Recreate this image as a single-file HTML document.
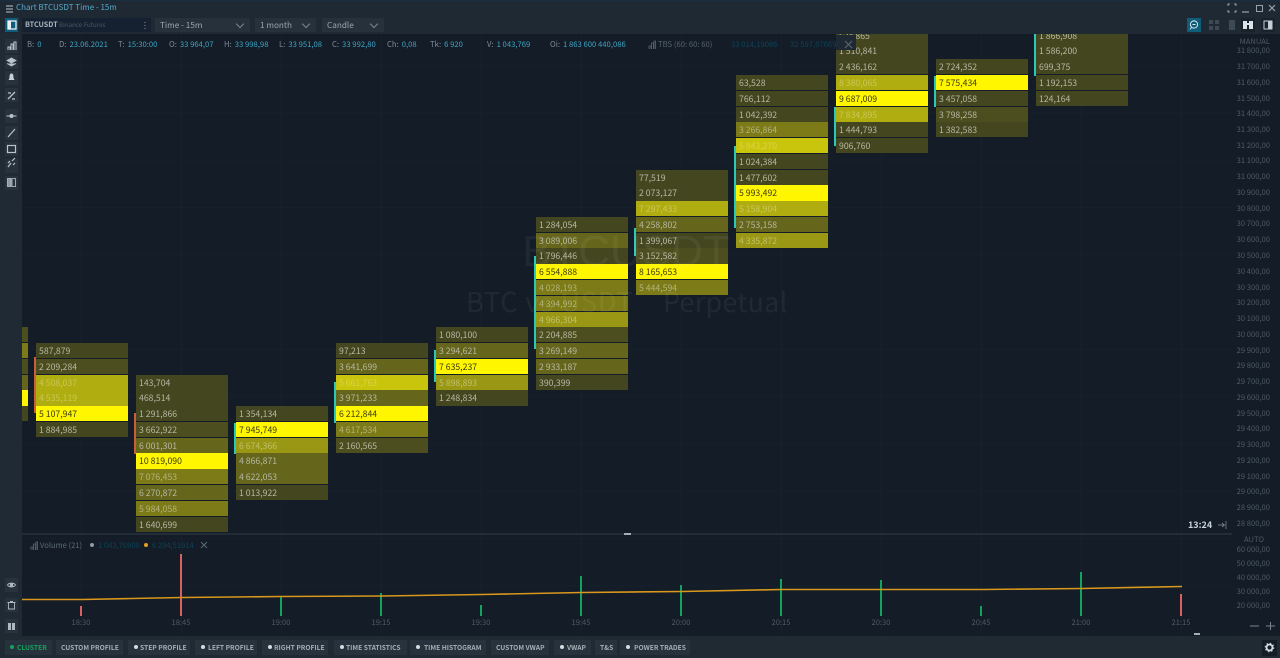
<!DOCTYPE html>
<html><head><meta charset="utf-8"><style>
html,body{margin:0;padding:0;width:1280px;height:658px;overflow:hidden;background:#131c27}
*{box-sizing:border-box}
body{position:relative;font-family:"Noto Sans CJK JP","Liberation Sans",sans-serif;color:#aab;filter:blur(.35px)}
.a{position:absolute;white-space:nowrap}
#top{left:0;top:0;width:1280px;height:34px;background:#1f2933;border-top:1px solid #16303f}
#left{left:0;top:34px;width:22px;height:602px;background:#1f2a34}
#bot{left:0;top:636px;width:1280px;height:22px;background:#1f2a33}
#chart{left:22px;top:34px;width:1210px;height:499px;overflow:hidden}
#grid{left:22px;top:34px;width:1210px;height:602px;background:linear-gradient(90deg,#16212c 1px,transparent 1px) 59px 0/100px 100%,linear-gradient(#16202b 1px,transparent 1px) 0 31px/100% 47.3px}
.col{position:absolute;top:-34px;width:92px;height:600px}
.col i{position:absolute;left:0;width:92px;height:15.2px;top:calc(43.45px + var(--k)*15.77px);font:normal 8.7px/15px "Noto Sans CJK JP","Liberation Sans",sans-serif;padding-left:3px;color:#b6b8a4}
i.A{background:#44461f}i.B{background:#4c4e1f}i.C{background:#65651b}i.D{background:#7c7b17;color:#b3b37c}
i.E{background:#999714;color:#c0c06c}i.F{background:#b0ad11;color:#c9c758}i.G{background:#c9c50c;color:#d8d548}i.Y{background:#fff600;color:#3c3c10}
.w{position:absolute;width:2px}
.t{background:#2fc7b8}.r{background:#c8603a}
.i{position:absolute;top:39px;font-size:7.7px;line-height:11px;color:#7f8d98;white-space:nowrap}
.i b{font-weight:400;color:#3fa4c4;margin-left:3px}
.p{position:absolute;right:10px;font-size:7.6px;line-height:10px;color:#4e5b66;white-space:nowrap;transform:translateY(-5px)}
.tm{position:absolute;top:618px;font-size:7.6px;line-height:10px;color:#4e5b66;transform:translateX(-50%)}
.sel{position:absolute;top:18px;height:14px;background:#26313b;font-size:8.2px;line-height:14px;color:#9ba8b0;padding-left:5px}
.sel:after{content:"";position:absolute;right:7px;top:3px;width:5px;height:5px;border-right:1px solid #7b8791;border-bottom:1px solid #7b8791;transform:rotate(45deg)}
.tab{position:absolute;top:640px;height:15px;background:#27323c;font-size:6.7px;font-weight:700;line-height:14px;color:#a4afb6;white-space:nowrap}
.tab s{position:absolute;left:6px;top:5px;width:4px;height:4px;border-radius:50%;background:#d5dbdf}
.tab span{position:absolute;top:0}
.btn{position:absolute;left:5px;width:13px;height:14px;background:#27323c}
.bar{position:absolute;width:1.6px}
.g{background:#12a35c}.d{background:#d85f62}
</style></head><body>
<div class="a" id="top"></div><div class="a" id="left"></div><div class="a" id="bot"></div>
<div class="a" id="grid"></div>

<!-- title -->
<svg class="a" style="left:6px;top:5px" width="7" height="8"><path d="M0 1H7M0 4H7M0 7H7" stroke="#b7c6d0" stroke-width="1"/></svg>
<div class="a" style="left:16px;top:2px;font-size:8px;line-height:12px;color:#56a9c9">Chart BTCUSDT Time - 15m</div>
<svg class="a" style="left:1227px;top:3px" width="50" height="11" fill="none" stroke="#94a3ad"><path d="M1 3V1H3M7 1H9V3M9 7V9H7M3 9H1V7"/><path d="M15 9H22" stroke-width="1.2"/><rect x="29.5" y="2.5" width="6" height="6"/><path d="M42 2L48 8M48 2L42 8" stroke-width="1.2"/></svg>

<!-- toolbar -->
<div class="a" style="left:5px;top:18px;width:13px;height:14px;background:#0f5d78"></div>
<svg class="a" style="left:7px;top:20px" width="10" height="10"><rect x="1" y="1" width="8" height="8" fill="none" stroke="#e8f2f6" stroke-width="1.3"/><rect x="1" y="1" width="3" height="8" fill="#e8f2f6"/></svg>
<div class="a" style="left:22px;top:18px;width:129px;height:14px;background:#152130"></div>
<div class="a" style="left:25px;top:18px;font-size:7.2px;font-weight:700;line-height:14px;color:#aab6be">BTCUSDT</div>
<div class="a" style="left:59px;top:18px;font-size:6.2px;line-height:14px;color:#4a5761">Binance Futures</div>
<svg class="a" style="left:143px;top:21px" width="4" height="9"><path d="M2 1v1M2 4v1M2 7v1" stroke="#8a97a1"/></svg>
<div class="sel" style="left:155px;width:95px">Time - 15m</div>
<div class="sel" style="left:255px;width:61px">1 month</div>
<div class="sel" style="left:322px;width:62px">Candle</div>

<div class="a" style="left:1187px;top:18px;width:14px;height:14px;background:#0f5d78"></div>
<svg class="a" style="left:1188px;top:19px" width="12" height="12" fill="none" stroke="#dbe9ee"><circle cx="6" cy="5.5" r="3.6"/><path d="M3.5 8.5L2 10.5M4.5 5.5H7.5"/></svg>
<svg class="a" style="left:1208px;top:19px" width="30" height="12"><path d="M1 1h4v4H1zM7 1h4v4H7zM1 7h4v4H1zM7 7h4v4H7z" fill="#3d4a54"/><rect x="21" y="1" width="6" height="10" fill="#3d4a54"/></svg>
<div class="a" style="left:1241px;top:18px;width:14px;height:14px;background:#18222d"></div>
<svg class="a" style="left:1243px;top:21px" width="10" height="8"><path d="M0 0h4v2h2V0h4v8H6V4H4v4H0z" fill="#dbe3e8"/></svg>
<div class="a" style="left:1261px;top:18px;width:14px;height:14px;background:#18222d"></div>
<svg class="a" style="left:1263px;top:20px" width="10" height="10"><rect x="1" y="1" width="8" height="8" fill="none" stroke="#c3ced5"/><rect x="5" y="1" width="4" height="8" fill="#c3ced5"/></svg>

<!-- chart -->
<div class="a" id="chart">
<div class="col" style="left:0;width:6px;overflow:hidden">
<i class="B" style="--k:18"></i><i class="D" style="--k:19"></i><i class="B" style="--k:20"></i><i class="C" style="--k:21"></i><i class="Y" style="--k:22"></i><i class="A" style="--k:23"></i>
</div>
<div class="col" style="left:14px">
<i class="A" style="--k:19">587,879</i><i class="B" style="--k:20">2 209,284</i><i class="F" style="--k:21">4 508,037</i><i class="F" style="--k:22">4 535,119</i><i class="Y" style="--k:23">5 107,947</i><i class="A" style="--k:24">1 884,985</i>
</div>
<div class="col" style="left:114px">
<i class="A" style="--k:21">143,704</i><i class="A" style="--k:22">468,514</i><i class="A" style="--k:23">1 291,866</i><i class="B" style="--k:24">3 662,922</i><i class="C" style="--k:25">6 001,301</i><i class="Y" style="--k:26">10 819,090</i><i class="D" style="--k:27">7 076,453</i><i class="C" style="--k:28">6 270,872</i><i class="D" style="--k:29">5 984,058</i><i class="A" style="--k:30">1 640,699</i>
</div>
<div class="col" style="left:214px">
<i class="A" style="--k:23">1 354,134</i><i class="Y" style="--k:24">7 945,749</i><i class="E" style="--k:25">6 674,366</i><i class="C" style="--k:26">4 866,871</i><i class="C" style="--k:27">4 622,053</i><i class="A" style="--k:28">1 013,922</i>
</div>
<div class="col" style="left:314px">
<i class="A" style="--k:19">97,213</i><i class="C" style="--k:20">3 641,699</i><i class="G" style="--k:21">5 661,763</i><i class="C" style="--k:22">3 971,233</i><i class="Y" style="--k:23">6 212,844</i><i class="D" style="--k:24">4 617,534</i><i class="B" style="--k:25">2 160,565</i>
</div>
<div class="col" style="left:414px">
<i class="A" style="--k:18">1 080,100</i><i class="C" style="--k:19">3 294,621</i><i class="Y" style="--k:20">7 635,237</i><i class="E" style="--k:21">5 898,893</i><i class="A" style="--k:22">1 248,834</i>
</div>
<div class="col" style="left:514px">
<i class="A" style="--k:11">1 284,054</i><i class="C" style="--k:12">3 089,006</i><i class="A" style="--k:13">1 796,446</i><i class="Y" style="--k:14">6 554,888</i><i class="D" style="--k:15">4 028,193</i><i class="D" style="--k:16">4 394,992</i><i class="E" style="--k:17">4 966,304</i><i class="B" style="--k:18">2 204,885</i><i class="C" style="--k:19">3 269,149</i><i class="C" style="--k:20">2 933,187</i><i class="A" style="--k:21">390,399</i>
</div>
<div class="col" style="left:614px">
<i class="A" style="--k:8">77,519</i><i class="A" style="--k:9">2 073,127</i><i class="F" style="--k:10">7 297,433</i><i class="C" style="--k:11">4 258,802</i><i class="A" style="--k:12">1 399,067</i><i class="B" style="--k:13">3 152,582</i><i class="Y" style="--k:14">8 165,653</i><i class="D" style="--k:15">5 444,594</i>
</div>
<div class="col" style="left:714px">
<i class="A" style="--k:2">63,528</i><i class="A" style="--k:3">766,112</i><i class="A" style="--k:4">1 042,392</i><i class="D" style="--k:5">3 266,864</i><i class="G" style="--k:6">5 843,270</i><i class="A" style="--k:7">1 024,384</i><i class="A" style="--k:8">1 477,602</i><i class="Y" style="--k:9">5 993,492</i><i class="F" style="--k:10">5 158,904</i><i class="C" style="--k:11">2 753,158</i><i class="E" style="--k:12">4 335,872</i>
</div>
<div class="col" style="left:814px">
<i class="A" style="--k:-1">534 865</i><i class="A" style="--k:0">1 510,841</i><i class="A" style="--k:1">2 436,162</i><i class="F" style="--k:2">8 380,065</i><i class="Y" style="--k:3">9 687,009</i><i class="F" style="--k:4">7 834,895</i><i class="A" style="--k:5">1 444,793</i><i class="A" style="--k:6">906,760</i>
</div>
<div class="col" style="left:914px">
<i class="A" style="--k:1">2 724,352</i><i class="Y" style="--k:2">7 575,434</i><i class="A" style="--k:3">3 457,058</i><i class="B" style="--k:4">3 798,258</i><i class="A" style="--k:5">1 382,583</i>
</div>
<div class="col" style="left:1014px">
<i class="A" style="--k:-1">1 866,908</i><i class="A" style="--k:0">1 586,200</i><i class="A" style="--k:1">699,375</i><i class="A" style="--k:2">1 192,153</i><i class="A" style="--k:3">124,164</i>
</div>
<div class="w r" style="left:12px;top:323px;height:56px"></div>
<div class="w r" style="left:112px;top:379px;height:41px"></div>
<div class="w t" style="left:212px;top:389px;height:31px"></div>
<div class="w t" style="left:312px;top:348px;height:41px"></div>
<div class="w t" style="left:412px;top:316px;height:32px"></div>
<div class="w t" style="left:512px;top:222px;height:93px"></div>
<div class="w t" style="left:612px;top:194px;height:28px"></div>
<div class="w t" style="left:712px;top:112px;height:82px"></div>
<div class="w t" style="left:812px;top:73px;height:39px"></div>
<div class="w t" style="left:912px;top:42px;height:31px"></div>
<div class="w t" style="left:1012px;top:0;height:42px"></div>

<div class="a" style="left:500px;top:190px;font:44px/56px 'Liberation Sans',sans-serif;color:rgba(255,255,255,.055)">BTCUSDT</div>
<div class="a" style="left:444px;top:249px;font:27px/36px 'Noto Sans CJK JP',sans-serif;letter-spacing:.9px;color:rgba(255,255,255,.06)">BTC vs USDT</div>
<div class="a" style="left:641px;top:249px;font:27px/36px 'Noto Sans CJK JP',sans-serif;letter-spacing:.2px;color:rgba(255,255,255,.06)">Perpetual</div>
</div>

<!-- info row -->
<div class="i" style="left:27px">B:<b>0</b></div>
<div class="i" style="left:59px">D:<b>23.06.2021</b></div>
<div class="i" style="left:118px">T:<b>15:30:00</b></div>
<div class="i" style="left:169px">O:<b>33 964,07</b></div>
<div class="i" style="left:224px">H:<b>33 998,98</b></div>
<div class="i" style="left:279px">L:<b>33 951,08</b></div>
<div class="i" style="left:332px">C:<b>33 992,80</b></div>
<div class="i" style="left:387px">Ch:<b>0,08</b></div>
<div class="i" style="left:430px">Tk:<b>6 920</b></div>
<div class="i" style="left:487px">V:<b>1 043,769</b></div>
<div class="i" style="left:550px">Oi:<b>1 863 600 440,086</b></div>
<svg class="a" style="left:648px;top:40px" width="8" height="9" fill="none" stroke="#5b6872"><path d="M1 9V6H3V9M3.5 9V3H5.5V9M6 9V1H7.5V9" stroke-width=".8"/></svg>
<div class="i" style="left:658px;color:#56646f">TBS (60: 60: 60)</div>
<div class="i" style="left:731px;color:#0d4458">33 014,19086</div>
<div class="i" style="left:790px;color:#0d4458">32 597,07669</div>
<div class="a" style="left:836px;top:35px;width:20px;height:15px;background:#1f2933"></div>
<svg class="a" style="left:844px;top:40px" width="9" height="9"><path d="M1 1L8 8M8 1L1 8" stroke="#5d6a74"/></svg>

<!-- left icons -->
<div class="btn" style="top:39px"></div><div class="btn" style="top:55px"></div><div class="btn" style="top:71px"></div><div class="btn" style="top:88px"></div>
<div class="btn" style="top:109px"></div><div class="btn" style="top:126px"></div><div class="btn" style="top:142px"></div><div class="btn" style="top:159px"></div><div class="btn" style="top:176px"></div>
<svg class="a" style="left:5px;top:39px" width="13" height="160" fill="none" stroke="#b8c4cc">
<path d="M3 11V8H5V11M6 11V5H8V11M9 11V3H11V11" stroke-width="1"/>
<path d="M2 21.5L6.5 19L11 21.5L6.5 24ZM2 24.5L6.5 27L11 24.5" fill="#b8c4cc" stroke-width=".8"/>
<path d="M6.5 34.5C4.5 34.5 4.5 37 4.5 39L3.5 41H9.5L8.5 39C8.5 37 8.5 34.5 6.5 34.5ZM5.5 42H7.5" fill="#c5d0d7" stroke="none"/>
<path d="M3 60L10 53M3 54h3M7 60h3" stroke-width="1.3"/>
<path d="M1.5 77H11.5" stroke-width="1"/><circle cx="6.5" cy="77" r="1.5" fill="#b8c4cc"/>
<path d="M3 98L10 90" stroke-width="1.2"/>
<rect x="2.5" y="106.5" width="8" height="7" stroke-width="1.2"/>
<path d="M3 128L6 124M7 122L10 119M3 124L5 122M8 126L10 124" stroke-width="1.2"/>
<rect x="2.5" y="139.5" width="3.5" height="8" fill="#8d99a2" stroke-width=".8"/><rect x="7" y="139.5" width="3.5" height="8" stroke-width=".8"/>
</svg>
<div class="btn" style="top:578px"></div><div class="btn" style="top:598px"></div><div class="btn" style="top:619px"></div>
<svg class="a" style="left:5px;top:578px" width="13" height="56" fill="none" stroke="#aeb9c1">
<path d="M2.5 7C4 4.5 9 4.5 10.5 7C9 9.5 4 9.5 2.5 7Z" stroke-width=".9"/><circle cx="6.5" cy="7" r="1.2" fill="#aeb9c1"/>
<path d="M3.5 25V31H9.5V25M2.5 24.5H10.5M5 23.5H8" stroke-width=".9"/>
<rect x="3" y="45" width="7" height="7" fill="#aeb9c1" stroke="none"/><path d="M6.5 45V52" stroke="#27323c"/>
</svg>

<!-- price scale -->
<div class="p" style="top:42px">MANUAL</div>
<div class="p" style="top:51px">31 800,00</div><div class="p" style="top:67px">31 700,00</div><div class="p" style="top:83px">31 600,00</div><div class="p" style="top:99px">31 500,00</div><div class="p" style="top:114px">31 400,00</div><div class="p" style="top:130px">31 300,00</div><div class="p" style="top:146px">31 200,00</div><div class="p" style="top:161px">31 100,00</div><div class="p" style="top:177px">31 000,00</div><div class="p" style="top:193px">30 900,00</div><div class="p" style="top:209px">30 800,00</div><div class="p" style="top:224px">30 700,00</div><div class="p" style="top:240px">30 600,00</div><div class="p" style="top:256px">30 500,00</div><div class="p" style="top:272px">30 400,00</div><div class="p" style="top:288px">30 300,00</div><div class="p" style="top:303px">30 200,00</div><div class="p" style="top:319px">30 100,00</div><div class="p" style="top:335px">30 000,00</div><div class="p" style="top:351px">29 900,00</div><div class="p" style="top:366px">29 800,00</div><div class="p" style="top:382px">29 700,00</div><div class="p" style="top:398px">29 600,00</div><div class="p" style="top:414px">29 500,00</div><div class="p" style="top:429px">29 400,00</div><div class="p" style="top:445px">29 300,00</div><div class="p" style="top:461px">29 200,00</div><div class="p" style="top:477px">29 100,00</div><div class="p" style="top:492px">29 000,00</div><div class="p" style="top:508px">28 900,00</div><div class="p" style="top:524px">28 800,00</div>
<div class="a" style="left:1188px;top:519px;font-size:9px;font-weight:700;line-height:12px;color:#c9d6de">13:24</div>
<svg class="a" style="left:1218px;top:520px" width="9" height="10" fill="none" stroke="#6f7d87"><path d="M0 5H6M4 3L6.5 5L4 7M8 1V9" stroke-width=".9"/></svg>

<!-- separator -->
<div class="a" style="left:22px;top:533px;width:1210px;height:2px;background:#222d37"></div>
<div class="a" style="left:624px;top:533px;width:7px;height:2px;background:#a3aeb5"></div>

<!-- volume -->
<svg class="a" style="left:30px;top:541px" width="8" height="9" fill="none" stroke="#5b6872"><path d="M1 9V6H3V9M3.5 9V3H5.5V9M6 9V1H7.5V9" stroke-width=".8"/></svg>
<div class="a" style="left:40px;top:540px;font-size:7.6px;line-height:11px;color:#5c6a75">Volume (21)</div>
<div class="a" style="left:90px;top:543px;width:4px;height:4px;border-radius:50%;background:#8f9aa2"></div>
<div class="a" style="left:98px;top:540px;font-size:7.6px;line-height:11px;color:#0d4458">1 043,76900</div>
<div class="a" style="left:144px;top:543px;width:4px;height:4px;border-radius:50%;background:#e0a020"></div>
<div class="a" style="left:152px;top:540px;font-size:7.6px;line-height:11px;color:#0d4458">6 294,51914</div>
<svg class="a" style="left:200px;top:541px" width="8" height="8"><path d="M1 1L7 7M7 1L1 7" stroke="#5d6a74"/></svg>

<div class="bar d" style="left:80px;top:606px;height:10px"></div>
<div class="bar d" style="left:180px;top:554px;height:62px"></div>
<div class="bar g" style="left:280px;top:596px;height:20px"></div>
<div class="bar g" style="left:380px;top:593px;height:23px"></div>
<div class="bar g" style="left:480px;top:605px;height:11px"></div>
<div class="bar g" style="left:580px;top:576px;height:40px"></div>
<div class="bar g" style="left:680px;top:585px;height:31px"></div>
<div class="bar g" style="left:780px;top:579px;height:37px"></div>
<div class="bar g" style="left:880px;top:580px;height:36px"></div>
<div class="bar g" style="left:980px;top:606px;height:10px"></div>
<div class="bar g" style="left:1080px;top:572px;height:44px"></div>
<div class="bar d" style="left:1180px;top:594px;height:22px"></div>
<svg class="a" style="left:22px;top:580px" width="1170" height="26"><path d="M0 19.5L60 19.5L160 17.5L260 16.5L360 16L460 14.5L560 12.5L660 11.5L760 9.5L860 9.5L960 9.5L1060 8.5L1160 6.5" fill="none" stroke="#d9981c" stroke-width="1.6"/></svg>

<div class="tm" style="left:81px">18:30</div><div class="tm" style="left:181px">18:45</div><div class="tm" style="left:281px">19:00</div><div class="tm" style="left:381px">19:15</div><div class="tm" style="left:481px">19:30</div><div class="tm" style="left:581px">19:45</div><div class="tm" style="left:681px">20:00</div><div class="tm" style="left:781px">20:15</div><div class="tm" style="left:881px">20:30</div><div class="tm" style="left:981px">20:45</div><div class="tm" style="left:1081px">21:00</div><div class="tm" style="left:1181px">21:15</div>

<div class="p" style="top:540px;right:16px">AUTO</div>
<div class="p" style="top:550px">60 000,00</div><div class="p" style="top:564px">50 000,00</div><div class="p" style="top:578px">40 000,00</div><div class="p" style="top:592px">30 000,00</div><div class="p" style="top:606px">20 000,00</div>
<svg class="a" style="left:1250px;top:621px" width="26" height="10" stroke="#77848e"><path d="M0 5H9M16 5H25M20.5 1V9"/></svg>
<div class="a" style="left:1194px;top:633px;width:6px;height:2px;background:#a3aeb5"></div>

<!-- bottom tabs -->
<div class="tab" style="left:5px;width:47px;color:#12a35c"><s style="background:#12a35c;left:5px"></s><span style="left:12px">CLUSTER</span></div>
<div class="tab" style="left:56px;width:67px"><span style="left:5px">CUSTOM PROFILE</span></div>
<div class="tab" style="left:128px;width:62px"><s></s><span style="left:12px">STEP PROFILE</span></div>
<div class="tab" style="left:195px;width:62px"><s></s><span style="left:13px">LEFT PROFILE</span></div>
<div class="tab" style="left:262px;width:66px"><s></s><span style="left:12px">RIGHT PROFILE</span></div>
<div class="tab" style="left:334px;width:73px"><s></s><span style="left:12px">TIME STATISTICS</span></div>
<div class="tab" style="left:410px;width:76px"><s></s><span style="left:14px">TIME HISTOGRAM</span></div>
<div class="tab" style="left:491px;width:58px"><span style="left:5px">CUSTOM VWAP</span></div>
<div class="tab" style="left:554px;width:37px"><s></s><span style="left:13px">VWAP</span></div>
<div class="tab" style="left:595px;width:22px"><span style="left:5px">T&amp;S</span></div>
<div class="tab" style="left:620px;width:70px"><s></s><span style="left:14px">POWER TRADES</span></div>
<div class="a" style="left:1262px;top:640px;width:15px;height:16px;background:#131c27"></div>
<svg class="a" style="left:1264px;top:642px" width="11" height="11"><circle cx="5.5" cy="5.5" r="3" fill="none" stroke="#d5dde2" stroke-width="1.8"/><circle cx="5.5" cy="5.5" r="4.3" fill="none" stroke="#d5dde2" stroke-width="1" stroke-dasharray="1.5 1.9"/></svg>
</body></html>
